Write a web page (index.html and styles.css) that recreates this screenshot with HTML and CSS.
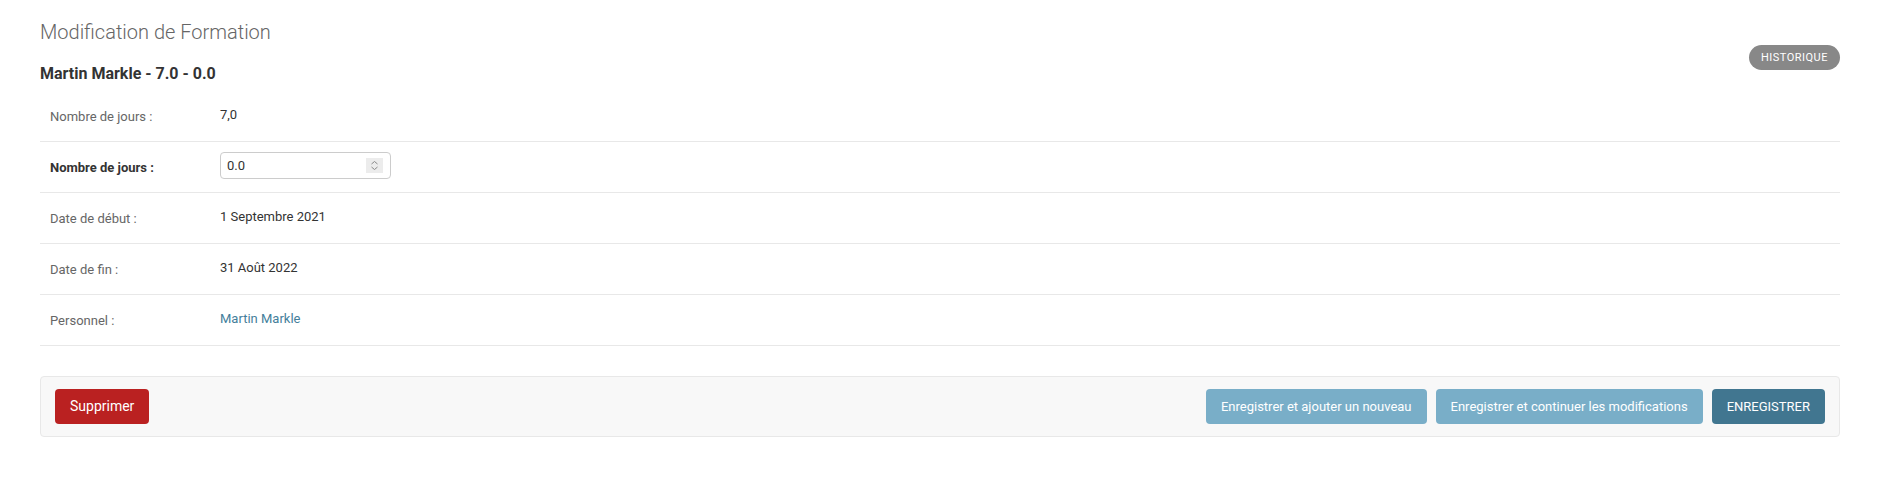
FILE: index.html
```html
<!DOCTYPE html>
<html lang="fr">
<head>
<meta charset="utf-8">
<title>Modification de Formation</title>
<link rel="stylesheet" href="styles.css">
</head>
<body>
<div class="content">
  <div class="page-head">
    <h1 class="title">Modification de Formation</h1>
    <h2 class="subtitle">Martin Markle - 7.0 - 0.0</h2>
    <ul class="object-tools"><li><a href="#" class="history">Historique</a></li></ul>
  </div>
  <form class="change-form">
    <fieldset class="module">
      <div class="form-row">
        <label class="field-label">Nombre de jours :</label>
        <div class="readonly">7,0</div>
      </div>
      <div class="form-row">
        <label class="field-label required">Nombre de jours :</label>
        <div class="input-wrap">
          <input class="num-input" type="text" value="0.0">
          <span class="spinner">
            <svg width="9" height="11" viewBox="0 0 9 11" aria-hidden="true"><path d="M1.5 4 L4.5 1.5 L7.5 4 M1.5 7 L4.5 9.5 L7.5 7" fill="none" stroke="#8a8a8a" stroke-width="1"/></svg>
          </span>
        </div>
      </div>
      <div class="form-row">
        <label class="field-label">Date de début :</label>
        <div class="readonly">1 Septembre 2021</div>
      </div>
      <div class="form-row">
        <label class="field-label">Date de fin :</label>
        <div class="readonly">31 Août 2022</div>
      </div>
      <div class="form-row">
        <label class="field-label">Personnel :</label>
        <div class="readonly"><a href="#" class="link">Martin Markle</a></div>
      </div>
    </fieldset>
    <div class="submit-row">
      <a href="#" class="deletelink">Supprimer</a>
      <button type="button" class="btn">Enregistrer et ajouter un nouveau</button>
      <button type="button" class="btn">Enregistrer et continuer les modifications</button>
      <button type="button" class="btn default">ENREGISTRER</button>
    </div>
  </form>
</div>
</body>
</html>
```

FILE: styles.css
```css
html, body {
  margin: 0;
  padding: 0;
  background: #fff;
}
body {
  font-family: Roboto, "Liberation Sans", Arial, sans-serif;
  font-size: 14px;
  color: #333;
}
.content {
  padding: 20px 40px;
}
.page-head {
  display: grid;
  grid-template-columns: 1fr auto;
}
.title {
  grid-column: 1;
  grid-row: 1;
  margin: 0 0 20px;
  font-size: 20px;
  font-weight: 300;
  color: #666;
}
.subtitle {
  grid-column: 1;
  grid-row: 2;
  margin: 0 0 8px;
  font-size: 16px;
  font-weight: 700;
  color: #333;
}
.object-tools {
  grid-column: 2;
  grid-row: 1 / span 2;
  align-self: end;
  list-style: none;
  margin: 0 0 21px;
  padding: 0;
}
.object-tools li {
  display: block;
}
.history {
  display: block;
  padding: 3px 12px;
  line-height: 19px;
  background: #888;
  color: #fff;
  font-size: 11px;
  font-weight: 400;
  text-transform: uppercase;
  letter-spacing: 0.5px;
  border-radius: 15px;
  text-decoration: none;
}
.change-form {
  margin: 0;
}
.module {
  border: none;
  margin: 0 0 30px;
  padding: 0;
  min-width: 0;
}
.form-row {
  display: flex;
  align-items: flex-start;
  padding: 10px;
  border-bottom: 1px solid #e8e8e8;
  font-size: 13px;
}
.field-label {
  display: block;
  width: 160px;
  flex: none;
  padding: 4px 10px 0 0;
  line-height: 1;
  font-size: 13px;
  color: #666;
}
.field-label::after {
  content: '';
  display: inline-block;
  vertical-align: middle;
  height: 26px;
}
.field-label.required {
  font-weight: 700;
  color: #333;
}
.readonly {
  padding: 6px 0;
  color: #333;
}
.link {
  color: #447e9b;
  text-decoration: none;
}
.input-wrap {
  position: relative;
  width: 171px;
}
.num-input {
  display: block;
  box-sizing: border-box;
  width: 171px;
  height: 27px;
  margin: 0;
  padding: 5px 6px;
  border: 1px solid #ccc;
  border-radius: 4px;
  font-family: Roboto, "Liberation Sans", Arial, sans-serif;
  font-size: 13px;
  color: #333;
  background: #fff;
}
.spinner {
  position: absolute;
  right: 8px;
  top: 6px;
  width: 17px;
  height: 15px;
  background: #ececec;
  display: flex;
  align-items: center;
  justify-content: center;
}
.spinner svg {
  display: block;
}
.submit-row {
  display: flex;
  align-items: center;
  gap: 9px;
  padding: 12px 14px;
  background: #f8f8f8;
  border: 1px solid #e8e8e8;
  border-radius: 4px;
  margin: 0 0 20px;
}
.deletelink {
  display: block;
  margin-right: auto;
  background: #ba2121;
  color: #fff;
  border-radius: 4px;
  padding: 10px 15px;
  height: 15px;
  line-height: 15px;
  font-size: 14px;
  text-decoration: none;
}
.btn {
  height: 35px;
  line-height: 15px;
  padding: 10px 15px;
  border: none;
  border-radius: 4px;
  background: #79aec8;
  color: #fff;
  font-family: Roboto, "Liberation Sans", Arial, sans-serif;
  font-size: 13px;
  font-weight: 400;
  cursor: pointer;
}
.btn.default {
  background: #417690;
}
```
